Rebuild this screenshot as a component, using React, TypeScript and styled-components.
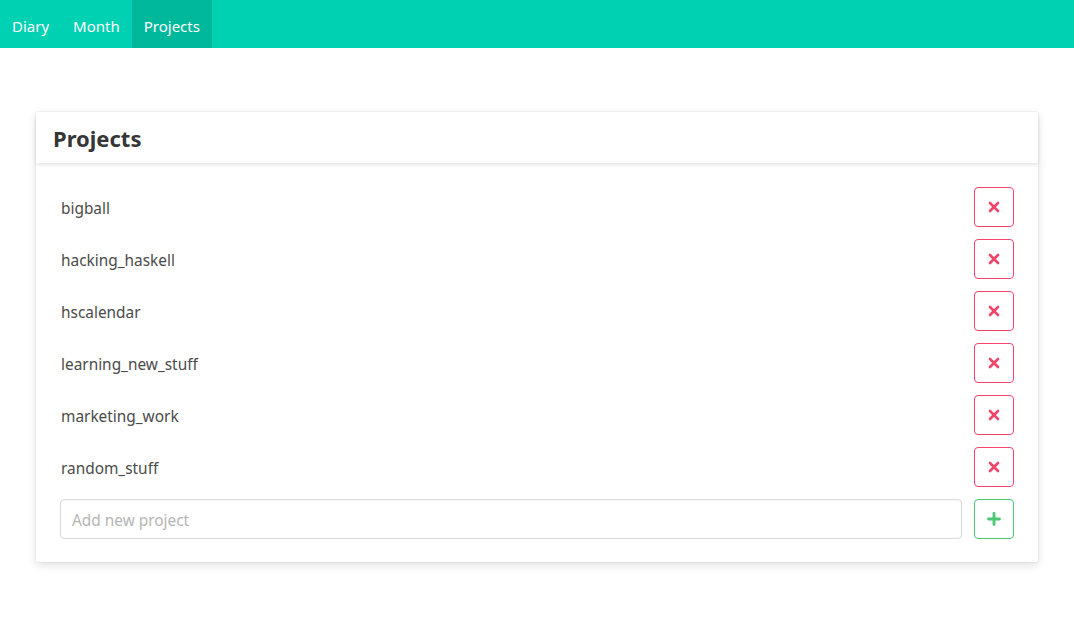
import styled, { createGlobalStyle } from "styled-components";

const GlobalStyle = createGlobalStyle`
  body {
    margin: 0;
    font-family: "Noto Sans", "Open Sans", sans-serif;
    color: #363636;
    background: #fff;
  }
  * {
    box-sizing: border-box;
  }
`;

const Navbar = styled.nav`
  display: flex;
  height: 48px;
  background-color: #00d1b2;
`;

const NavItem = styled.a<{ $active?: boolean }>`
  display: flex;
  align-items: center;
  padding: 3px 12px 0;
  color: #fff;
  font-size: 15px;
  text-decoration: none;
  background-color: ${(p) => (p.$active ? "#00b89c" : "transparent")};
  cursor: pointer;
`;

const Section = styled.section`
  padding: 64px 36px;
`;

const Card = styled.div`
  background: #fff;
  border-radius: 2px;
  box-shadow: 0 3px 10px rgba(10, 10, 10, 0.13), 0 0 0 1px rgba(10, 10, 10, 0.03);
`;

const CardHeader = styled.header`
  display: flex;
  align-items: center;
  height: 51px;
  padding: 0 17px;
  box-shadow: 0 2px 3px rgba(10, 10, 10, 0.1);
`;

const Title = styled.h1`
  margin: 0;
  font-size: 22px;
  font-weight: 700;
  color: #363636;
`;

const CardContent = styled.div`
  display: flex;
  flex-direction: column;
  gap: 12px;
  padding: 24px 24px 23px;
`;

const Row = styled.div`
  display: flex;
  align-items: center;
  justify-content: space-between;
  gap: 12px;
  height: 40px;
`;

const Name = styled.span`
  padding: 2px 0 0 1px;
  font-size: 15.4px;
  color: #4a4a4a;
`;

const IconButton = styled.button<{ $color: string }>`
  flex: none;
  display: flex;
  align-items: center;
  justify-content: center;
  width: 40px;
  height: 40px;
  padding: 0;
  background: #fff;
  border: 1px solid ${(p) => p.$color};
  border-radius: 4px;
  color: ${(p) => p.$color};
  cursor: pointer;
`;

const Input = styled.input`
  flex: 1;
  height: 40px;
  padding: 2px 11px 0;
  border: 1px solid #dbdbdb;
  border-radius: 4px;
  font-family: inherit;
  font-size: 15.4px;
  color: #363636;
  box-shadow: inset 0 1px 2px rgba(10, 10, 10, 0.05);

  &::placeholder {
    color: #b5b5b5;
  }

  &:focus {
    outline: none;
    border-color: #00d1b2;
  }
`;

const CrossIcon = () => (
  <svg width="12" height="12" viewBox="0 0 12 12">
    <path
      d="M2 2 L10 10 M10 2 L2 10"
      stroke="currentColor"
      strokeWidth="2.6"
      strokeLinecap="round"
    />
  </svg>
);

const PlusIcon = () => (
  <svg width="14" height="14" viewBox="0 0 14 14">
    <path
      d="M7 1.5 V12.5 M1.5 7 H12.5"
      stroke="currentColor"
      strokeWidth="2.8"
      strokeLinecap="round"
    />
  </svg>
);

const projects = [
  "bigball",
  "hacking_haskell",
  "hscalendar",
  "learning_new_stuff",
  "marketing_work",
  "random_stuff",
];

const App = () => {
  return (
    <>
      <GlobalStyle />
      <Navbar>
        <NavItem>Diary</NavItem>
        <NavItem>Month</NavItem>
        <NavItem $active>Projects</NavItem>
      </Navbar>
      <Section>
        <Card>
          <CardHeader>
            <Title>Projects</Title>
          </CardHeader>
          <CardContent>
            {projects.map((name) => (
              <Row key={name}>
                <Name>{name}</Name>
                <IconButton $color="#f14668">
                  <CrossIcon />
                </IconButton>
              </Row>
            ))}
            <Row>
              <Input placeholder="Add new project" />
              <IconButton $color="#48c774">
                <PlusIcon />
              </IconButton>
            </Row>
          </CardContent>
        </Card>
      </Section>
    </>
  );
};

export default App;
